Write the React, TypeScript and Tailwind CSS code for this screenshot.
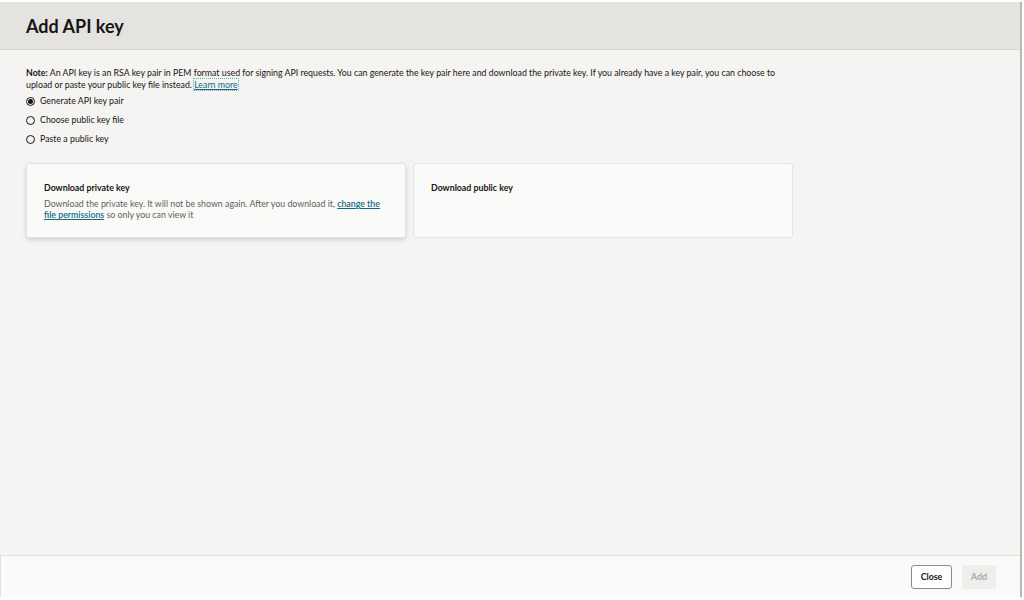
export default function App() {
  return (
    <div
      className="w-[1024px] h-[600px] bg-white flex flex-col overflow-hidden text-[#161513]"
      style={{ fontFamily: 'Lato, "Noto Sans", "Liberation Sans", sans-serif' }}
    >
      <div className="flex flex-1 flex-col mt-[2px] mb-[3px] mr-[2px] border-r-2 border-[#b9b7b4] min-h-0">
        {/* Header */}
        <div className="h-[48px] shrink-0 bg-[#e4e3e0] border-b border-[#d6d4d0] flex items-center px-[26px]">
          <h1 className="text-[18px] font-bold leading-none mt-[1px]">Add API key</h1>
        </div>

        {/* Body */}
        <div className="flex-1 bg-[#f5f4f2] px-[26px] pt-[17px]">
          <p className="text-[8.8px] leading-[12px] max-w-[766px]">
            <span className="font-bold">Note:</span> An API key is an RSA key pair in PEM format used for signing API
            requests. You can generate the key pair here and download the private key. If you already have a key pair,
            you can choose to upload or paste your public key file instead.{" "}
            <a className="text-[#0e6a87] underline outline outline-1 outline-dotted outline-[#6ea8c2]">Learn more</a>
          </p>

          <div className="flex flex-col gap-[7px] mt-[4px] text-[8.8px] leading-[12px]">
            <label className="flex items-center gap-[5px]">
              <span className="w-[9px] h-[9px] rounded-full border border-[#161513] flex items-center justify-center">
                <span className="w-[5px] h-[5px] rounded-full bg-[#161513]" />
              </span>
              Generate API key pair
            </label>
            <label className="flex items-center gap-[5px]">
              <span className="w-[9px] h-[9px] rounded-full border border-[#161513]" />
              Choose public key file
            </label>
            <label className="flex items-center gap-[5px]">
              <span className="w-[9px] h-[9px] rounded-full border border-[#161513]" />
              Paste a public key
            </label>
          </div>

          <div className="flex gap-[7px] mt-[18px]">
            <div className="w-[380px] h-[75px] bg-[#fafaf9] rounded-[3px] border border-[#e6e4e1] shadow-[0_2px_4px_rgba(0,0,0,0.14)] pl-[17px] pr-[18px] pt-[18px]">
              <div className="text-[8.8px] font-bold leading-[12px]">Download private key</div>
              <div className="text-[8.8px] leading-[11px] text-[#5f5d5a] mt-[4px]">
                Download the private key. It will not be shown again. After you download it,{" "}
                <a className="text-[#0e6a87] underline font-semibold">change the file permissions</a> so only you can
                view it
              </div>
            </div>
            <div className="w-[380px] h-[75px] bg-[#fafaf9] rounded-[3px] border border-[#e6e4e1] px-[17px] pt-[18px]">
              <div className="text-[8.8px] font-bold leading-[12px]">Download public key</div>
            </div>
          </div>
        </div>

        {/* Footer */}
        <div className="h-[42px] shrink-0 bg-[#fafaf9] border-t border-l border-[#e2e0dd] flex items-center justify-end gap-[10px] pr-[24px]">
          <button className="h-[24px] w-[41px] bg-white border border-[#8d8b88] rounded-[3px] text-[8.8px] font-bold">
            Close
          </button>
          <button className="h-[24px] w-[34px] bg-[#efeeec] rounded-[3px] text-[8.8px] font-bold text-[#a9a7a4]">
            Add
          </button>
        </div>
      </div>
    </div>
  );
}
